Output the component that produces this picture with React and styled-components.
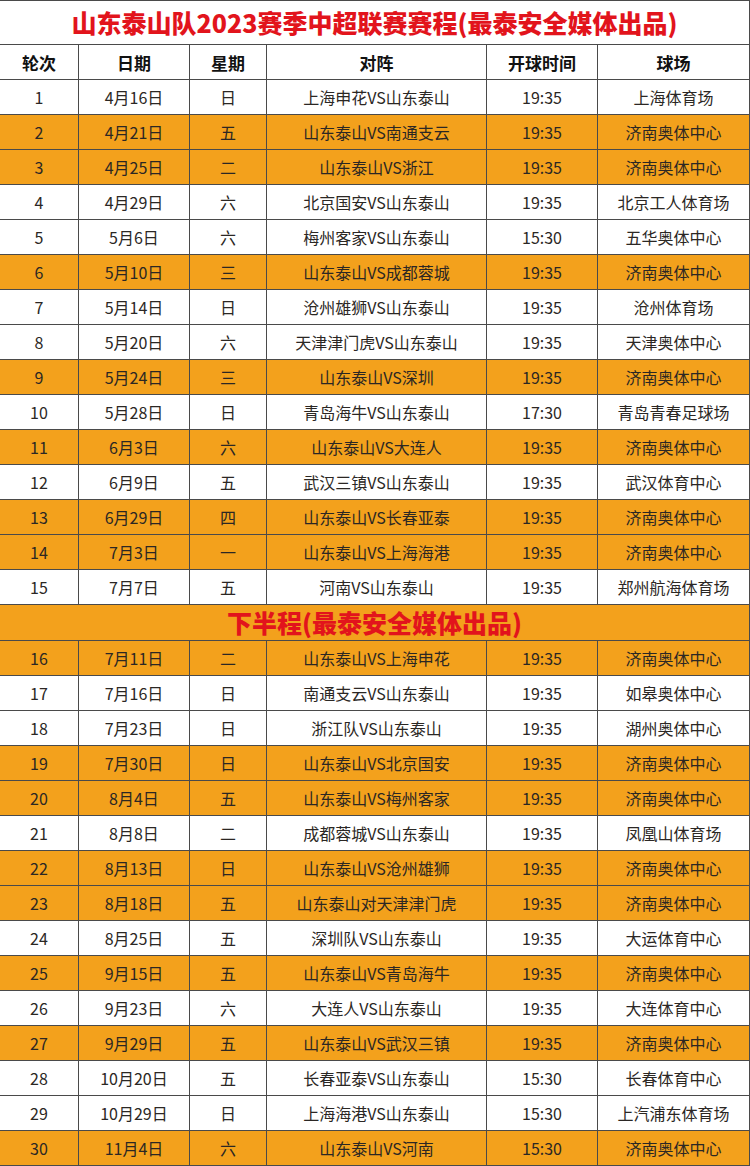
import React from "react";
import styled, { createGlobalStyle } from "styled-components";

const HOME = "济南奥体中心";

const firstHalf = [
  ["1", "4月16日", "日", "上海申花VS山东泰山", "19:35", "上海体育场"],
  ["2", "4月21日", "五", "山东泰山VS南通支云", "19:35", HOME],
  ["3", "4月25日", "二", "山东泰山VS浙江", "19:35", HOME],
  ["4", "4月29日", "六", "北京国安VS山东泰山", "19:35", "北京工人体育场"],
  ["5", "5月6日", "六", "梅州客家VS山东泰山", "15:30", "五华奥体中心"],
  ["6", "5月10日", "三", "山东泰山VS成都蓉城", "19:35", HOME],
  ["7", "5月14日", "日", "沧州雄狮VS山东泰山", "19:35", "沧州体育场"],
  ["8", "5月20日", "六", "天津津门虎VS山东泰山", "19:35", "天津奥体中心"],
  ["9", "5月24日", "三", "山东泰山VS深圳", "19:35", HOME],
  ["10", "5月28日", "日", "青岛海牛VS山东泰山", "17:30", "青岛青春足球场"],
  ["11", "6月3日", "六", "山东泰山VS大连人", "19:35", HOME],
  ["12", "6月9日", "五", "武汉三镇VS山东泰山", "19:35", "武汉体育中心"],
  ["13", "6月29日", "四", "山东泰山VS长春亚泰", "19:35", HOME],
  ["14", "7月3日", "一", "山东泰山VS上海海港", "19:35", HOME],
  ["15", "7月7日", "五", "河南VS山东泰山", "19:35", "郑州航海体育场"],
];

const secondHalf = [
  ["16", "7月11日", "二", "山东泰山VS上海申花", "19:35", HOME],
  ["17", "7月16日", "日", "南通支云VS山东泰山", "19:35", "如皋奥体中心"],
  ["18", "7月23日", "日", "浙江队VS山东泰山", "19:35", "湖州奥体中心"],
  ["19", "7月30日", "日", "山东泰山VS北京国安", "19:35", HOME],
  ["20", "8月4日", "五", "山东泰山VS梅州客家", "19:35", HOME],
  ["21", "8月8日", "二", "成都蓉城VS山东泰山", "19:35", "凤凰山体育场"],
  ["22", "8月13日", "日", "山东泰山VS沧州雄狮", "19:35", HOME],
  ["23", "8月18日", "五", "山东泰山对天津津门虎", "19:35", HOME],
  ["24", "8月25日", "五", "深圳队VS山东泰山", "19:35", "大运体育中心"],
  ["25", "9月15日", "五", "山东泰山VS青岛海牛", "19:35", HOME],
  ["26", "9月23日", "六", "大连人VS山东泰山", "19:35", "大连体育中心"],
  ["27", "9月29日", "五", "山东泰山VS武汉三镇", "19:35", HOME],
  ["28", "10月20日", "五", "长春亚泰VS山东泰山", "15:30", "长春体育中心"],
  ["29", "10月29日", "日", "上海海港VS山东泰山", "15:30", "上汽浦东体育场"],
  ["30", "11月4日", "六", "山东泰山VS河南", "15:30", HOME],
];

const headers = ["轮次", "日期", "星期", "对阵", "开球时间", "球场"];

const GlobalStyle = createGlobalStyle`
  body {
    margin: 0;
    background: #fff;
    font-family: "Noto Sans CJK SC", "Noto Sans", sans-serif;
  }
`;

const Sheet = styled.div`
  width: 750px;
  display: grid;
  grid-template-columns: 79px 111px 77px 220px 111px 152px;
  border-top: 1px solid #4a4a4a;
`;

const Banner = styled.div`
  grid-column: 1 / -1;
  height: ${(p) => p.$h}px;
  box-sizing: border-box;
  display: flex;
  align-items: center;
  justify-content: center;
  background: ${(p) => (p.$orange ? "#f3a11c" : "#fff")};
  color: #e2141c;
  font-size: 25px;
  font-weight: 900;
  border-right: 1px solid #4a4a4a;
  border-bottom: 1px solid #4a4a4a;
  padding-bottom: 1px;
`;

const Cell = styled.div`
  height: 35px;
  box-sizing: border-box;
  display: flex;
  align-items: center;
  justify-content: center;
  border-right: 1px solid #4a4a4a;
  border-bottom: 1px solid #4a4a4a;
  background: ${(p) => (p.$orange ? "#f3a11c" : "#fff")};
  color: ${(p) => (p.$head ? "#111" : "#2b2724")};
  font-size: ${(p) => (p.$head ? "17px" : "16px")};
  font-weight: ${(p) => (p.$head ? 700 : 400)};
  white-space: nowrap;
`;

const Row = ({ cells, orange, head }) =>
  cells.map((c, i) => (
    <Cell key={i} $orange={orange} $head={head}>
      {c}
    </Cell>
  ));

export default function App() {
  return (
    <>
      <GlobalStyle />
      <Sheet>
        <Banner $h={44}>山东泰山队2023赛季中超联赛赛程(最泰安全媒体出品)</Banner>
        <Row cells={headers} head />
        {firstHalf.map((r) => (
          <Row key={r[0]} cells={r} orange={r[5] === HOME} />
        ))}
        <Banner $h={36} $orange>
          下半程(最泰安全媒体出品)
        </Banner>
        {secondHalf.map((r) => (
          <Row key={r[0]} cells={r} orange={r[5] === HOME} />
        ))}
      </Sheet>
    </>
  );
}
